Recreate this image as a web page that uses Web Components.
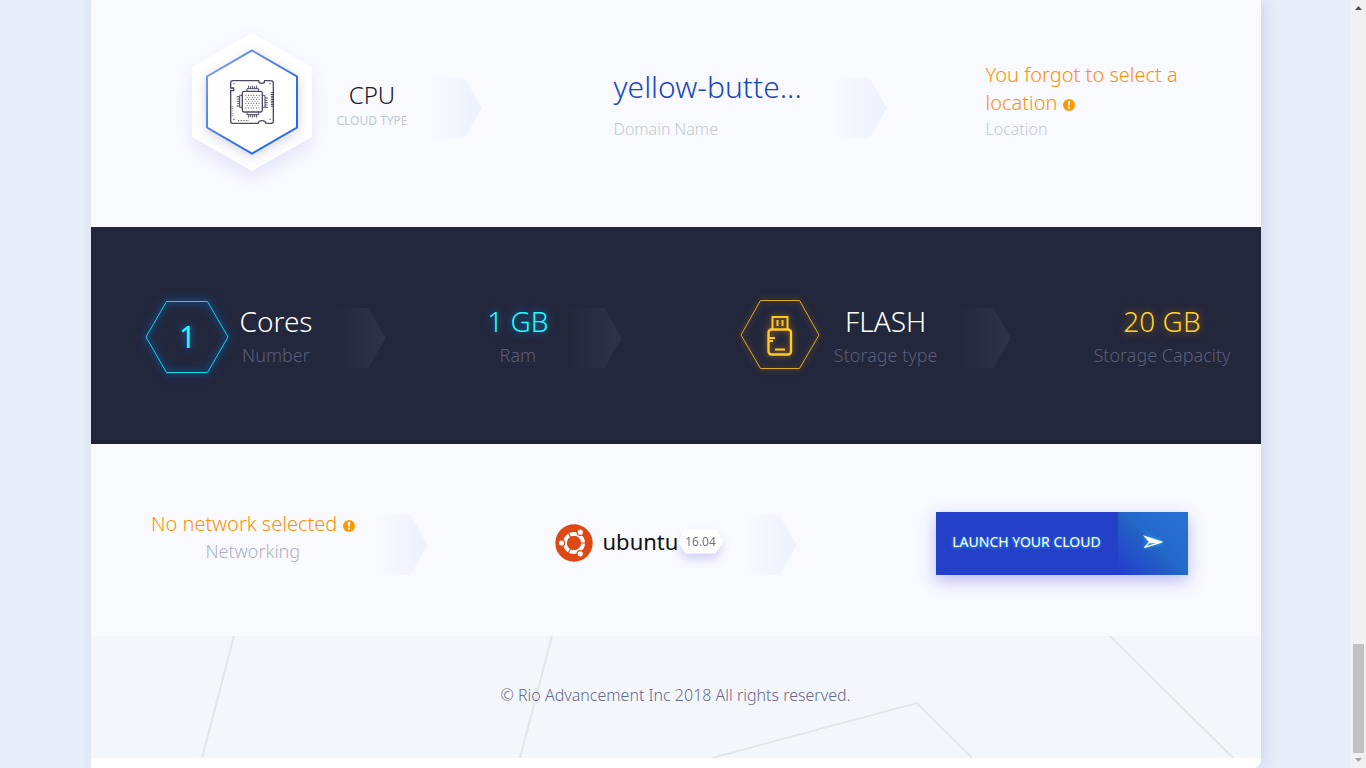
<!DOCTYPE html>
<html lang="en">
<head>
<meta charset="utf-8">
<meta name="viewport" content="width=device-width, initial-scale=1">
<title>Rio Advancement – Launch your cloud</title>
<style>
  html, body { margin: 0; padding: 0; }
  body { background: #e7eefa; font-family: "Noto Sans", "Open Sans", sans-serif; font-weight: 300; color: #14172f; }
</style>
</head>
<body>
<rio-app></rio-app>

<script>
const define = (name, html) => {
  const template = document.createElement('template');
  template.innerHTML = html;
  customElements.define(name, class extends HTMLElement {
    constructor() {
      super();
      this.attachShadow({ mode: 'open' }).append(template.content.cloneNode(true));
    }
  });
};

/* Fading chevron that closes a step */
define('rio-arrow', `
<style>
  :host { display: block; flex: none; width: 54px; height: 60px; margin-left: 19px; margin-top: var(--arrow-top, 0);
    background: linear-gradient(90deg, transparent, var(--arrow, #ecf1fc));
    clip-path: polygon(0 0, 37px 0, 100% 50%, 37px 100%, 0 100%); }
</style>`);

/* Round exclamation mark after a warning */
define('rio-alert', `
<style>
  :host { display: inline-block; width: 12px; height: 12px; vertical-align: -1px; }
  svg { display: block; }
</style>
<svg width="12" height="12" viewBox="0 0 12 12" aria-hidden="true">
  <circle cx="6" cy="6" r="6" fill="#ff9800"/>
  <path d="M4.800 2h2.400l-.4 4.600H5.200z" fill="#fff"/><rect x="5" y="7.600" width="2" height="2" fill="#fff"/>
</svg>`);

/* Value with a caption under it */
define('rio-value', `
<style>
  :host { display: block; flex: none; text-align: center; font-size: 28px; line-height: 40px; padding-top: 1px; color: var(--value, #fff); }
  .label { font-size: 18px; line-height: 28px; color: var(--label, #5a5e78); }
  :host([kind="cpu"]) { font-size: 24px; line-height: 30px; margin-top: 46px; min-width: 73px; color: #14172f; }
  :host([kind="cpu"]) .label { font-size: 12px; font-weight: 400; line-height: 22px; }
  :host([kind="domain"]) { font-size: 30px; margin-top: 33px; width: 200px; text-align: left; color: #1a48bc; }
  :host([kind="domain"]) .label { font-size: 16px; line-height: 24px; margin-top: 10px; }
  :host([kind="location"]) { font-size: 20px; line-height: 28px; margin-top: 27px; width: 208px; text-align: left; color: #ff9000; }
  :host([kind="location"]) .label { font-size: 16px; line-height: 24px; }
  :host([kind="network"]) { font-size: 20px; line-height: 28px; color: #ff9000; }
  :host([kind="network"]) .label { line-height: 26px; }
  :host([glow="cyan"]) .value { color: #1cfdff; text-shadow: 0 0 8px #0f7fd0; }
  :host([glow="amber"]) .value { color: #ffd22d; text-shadow: 0 0 8px #a86a10; }
</style>
<div class="value"><slot></slot></div>
<div class="label"><slot name="label"></slot></div>`);

define('rio-cpu-icon', `
<style>
  :host { display: block; flex: none; width: 120px; height: 138px; margin-right: 24px; }
  svg { display: block; overflow: visible; }
  .outer { filter: drop-shadow(0 8px 8px rgba(90, 90, 220, .13)); }
  .inner { filter: drop-shadow(0 3px 6px rgba(50, 50, 100, .2)); }
</style>
<svg width="120" height="138" viewBox="0 0 120 138" aria-hidden="true">
  <defs><linearGradient id="edge" x1="0" y1="0" x2="1" y2="1">
    <stop offset="0" stop-color="#86a0f8"/><stop offset=".6" stop-color="#2f70ee"/><stop offset="1" stop-color="#1f66f0"/>
  </linearGradient></defs>
  <path class="outer" fill="#fff" d="M60 0l60 34v70l-60 34L0 104V34z"/>
  <path class="inner" fill="#fff" stroke="url(#edge)" stroke-width="2" d="M60 17.500l45 26v51L60 120.500l-45-26v-51z"/>
  <g transform="translate(38 47) scale(.3333)" fill="none" stroke="#4a4c60" stroke-width="4">
    <path d="M8 2h78q0 8 9 8t9-8h18q8 0 8 8v114q0 6-6 6h-16q-2-8-12-8t-12 8H8q-6 0-6-6V32h9v-8H2V8q0-6 6-6z"/>
    <rect x="37" y="34" width="60" height="62" rx="5"/>
    <path d="M51 33v-7h35v7M51 97v7h35v-7M36 46h-7v36h7M98 46h7v36h-7" stroke-width="3"/>
    <path d="M56 26v-9M62 26v-7M68 26v-9M74 26v-7M80 26v-9M56 104v9M62 104v7M68 104v9M74 104v7M80 104v9M29 50h-9M29 57h-7M29 64h-9M29 71h-7M29 78h-9M105 54h9M105 61h7M105 68h9M105 75h7M105 82h9" stroke-width="3"/>
    <path d="M126 37v43" stroke-width="7" stroke-dasharray="3 2"/>
    <path d="M7 78v30" stroke-width="6" stroke-dasharray="2 5" opacity=".6"/>
    <path d="M24 122h33" stroke-width="3" stroke-dasharray="4 4"/>
    <path d="M46 46h43M46 58h43M46 70h43M46 84h43" stroke-width="3" stroke-dasharray="3 5"/>
    <path d="M50 52h37M50 64h37M50 77h37" stroke-width="2" stroke-dasharray="3 5"/>
    <path d="M10 11h4M118 11h4M10 118h4M118 118h4" stroke-width="3"/>
  </g>
</svg>`);

define('rio-count', `
<style>
  :host { display: grid; flex: none; width: 84px; height: 74px; margin-right: 10px; place-items: center;
    font-size: 30px; line-height: 40px; color: #1cfdff; }
  svg { grid-area: 1 / 1; overflow: visible; filter: drop-shadow(0 0 3px #0a78e0) drop-shadow(0 0 4px #0a5cb0); }
  span { grid-area: 1 / 1; font-weight: 400; text-shadow: 0 0 8px #0f7fd0; }
</style>
<svg width="84" height="74" viewBox="0 0 84 74" aria-hidden="true">
  <path d="M21.500 1.500h41L83 37 62.500 72.500h-41L1 37z" fill="none" stroke="#10dbe0"/>
</svg>
<span><slot></slot></span>`);

define('rio-flash-icon', `
<style>
  :host { display: block; flex: none; width: 80px; height: 70px; margin-right: 14px; }
  svg { display: block; overflow: visible; filter: drop-shadow(0 0 3px rgba(230, 140, 0, .7)); }
</style>
<svg width="80" height="70" viewBox="0 0 80 70" aria-hidden="true" fill="none" stroke="#ffc928">
  <path d="M20.500.500h39L79 35 59.500 68.500h-39L1 35z" stroke="#e0ac22"/>
  <rect x="28.500" y="29.500" width="22.500" height="25" rx="3" stroke-width="2.400"/>
  <path d="M32.500 29V17h15v12M37.500 20v6M42.500 20v6" stroke-width="2"/>
  <path d="M29 38h6M29 41h4M35 49.500h10" stroke-width="2"/>
</svg>`);

define('rio-ubuntu', `
<style>
  :host { display: flex; flex: none; align-items: center; margin-top: 15px; height: 38px; }
  svg { display: block; margin-right: 10px; }
  .name { font-weight: 400; font-size: 22px; line-height: 34px; padding-bottom: 4px; color: #111; width: 75px; }
  .version { width: 46px; height: 25px; margin-top: -4px;
    filter: drop-shadow(0 6px 5px rgba(80, 80, 220, .22)); font-size: 12px; font-weight: 400; line-height: 25px; color: #70727b; }
  .version span { display: block; text-align: center; background: #fff;
    clip-path: polygon(8px 0, 38px 0, 100% 50%, 38px 100%, 8px 100%, 0 50%); }
</style>
<svg width="38" height="38" viewBox="0 0 38 38" aria-hidden="true">
  <circle cx="19" cy="19" r="18.700" fill="#dd4814"/>
  <circle cx="19" cy="19" r="9" fill="none" stroke="#fff" stroke-width="4"/>
  <g stroke="#dd4814" stroke-width="1.200"><path d="M19 19h13M19 19l-6.500-11.300M19 19l-6.500 11.300"/></g>
  <circle cx="19" cy="19" r="6.900" fill="#dd4814"/>
  <g fill="#fff" stroke="#dd4814" stroke-width="1.200">
    <circle cx="6.500" cy="19" r="3.200"/><circle cx="25.300" cy="8.200" r="3.200"/><circle cx="25.300" cy="29.800" r="3.200"/>
  </g>
</svg>
<span class="name">ubuntu</span>
<div class="version"><span><slot></slot></span></div>`);

define('rio-launch', `
<style>
  :host { display: block; flex: none; margin-top: 3px; }
  button { display: flex; align-items: stretch; width: 252px; height: 63px; padding: 0; border: 0; cursor: pointer;
    background: #2440c8; color: #fff; font: inherit; font-size: 14px; font-weight: 400; line-height: 60px; box-shadow: 0 6px 16px rgba(70, 70, 210, .35); }
  .text { flex: 1; text-align: center; text-shadow: 0 1px 3px #25b0ff; }
  .go { display: grid; place-items: center; width: 70px; padding-bottom: 4px; box-sizing: border-box;
    background: linear-gradient(45deg, #2340ce 5%, #2364c4 50%, #2369c9 50%, #2b70d5 100%); }
  svg { overflow: visible; filter: drop-shadow(0 0 2px #38b0ff); }
</style>
<button type="button">
  <span class="text"><slot></slot></span>
  <span class="go"><svg width="20" height="14" viewBox="0 0 60 40" aria-hidden="true">
    <path fill="#fff" d="M0 0l60 19.500L18 20z"/>
    <path fill="none" stroke="#fff" stroke-width="4" stroke-linejoin="round" d="M56 20L5 36l13-14z"/>
  </svg></span>
</button>`);

/* One cell of a band: optional icon, value, chevron */
define('rio-step', `
<style>
  :host { display: flex; align-items: flex-start; justify-content: flex-end; min-width: 0; }
  :host([last]) { justify-content: flex-start; }
</style>
<slot></slot>`);

define('rio-band', `
<style>
  :host { display: grid; box-sizing: border-box; background: #f9faff; }
  :host([row="type"]) { grid-template-columns: 391fr 405fr 374fr; min-height: 227px; padding-top: 33px; --label: #c3c8d5; --arrow-top: 45px; }
  :host([row="type"]) ::slotted([last]) { padding-left: 99px; }
  :host([row="hardware"]) { grid-template-columns: 295fr 236fr 389fr 250fr; min-height: 217px; padding-top: 73px;
    background: #23273c; border-bottom: 4px solid #202338; --arrow: #2f3349; --arrow-top: 8px; }
  :host([row="hardware"]) ::slotted([last]) { padding-left: 83px; }
  :host([row="launch"]) { grid-template-columns: 337fr 369fr 464fr; min-height: 192px; padding-top: 65px; --label: #adb3c5; --arrow-top: 6px; }
  :host([row="launch"]) ::slotted([last]) { padding-left: 139px; }
</style>
<slot></slot>`);

define('rio-footer', `
<style>
  :host { display: grid; height: 122px; background: #f3f6fb; }
  svg { grid-area: 1 / 1; width: 100%; height: 122px; }
  p { grid-area: 1 / 1; place-self: center; margin: 0; padding-bottom: 4px; font-size: 16px; line-height: 24px; color: #65698a; }
</style>
<svg viewBox="0 0 1170 122" preserveAspectRatio="none" fill="none" stroke="#e2e6ec" stroke-width="2" aria-hidden="true">
  <path d="M143 0l-32 122M461 0l-32 122M621 122l205-55 55 55M1019 0l123 122"/>
</svg>
<p><slot></slot></p>`);

define('rio-scrollbar', `
<style>
  :host { display: flex; flex-direction: column; align-items: center; box-sizing: border-box; width: 15px; height: 100vh; background: #f1f1f1; }
  svg { flex: none; display: block; }
  .track { flex: 1; display: flex; flex-direction: column; justify-content: flex-end; }
  .thumb { width: 11px; height: 109px; background: #c1c1c1; }
</style>
<svg width="15" height="15" viewBox="0 0 15 15" aria-hidden="true"><path d="M4 10l3.500-4L11 10z" fill="#505050"/></svg>
<div class="track"><div class="thumb"></div></div>
<svg width="15" height="15" viewBox="0 0 15 15" aria-hidden="true"><path d="M4 5l3.500 4L11 5z" fill="#a3a3a3"/></svg>`);

define('rio-app', `
<style>
  :host { display: grid; grid-template-columns: 1fr 15px; min-height: 100vh; overflow: hidden; }
  main { width: calc(100% - 32px); max-width: 1170px; justify-self: center; box-sizing: border-box; padding-bottom: 10px;
    align-self: start; background: #fff; border-radius: 0 0 8px 0; box-shadow: 3px 0 14px rgba(50, 60, 110, .14); }
</style>
<main>
  <rio-band row="type">
    <rio-step><rio-cpu-icon></rio-cpu-icon><rio-value kind="cpu">CPU<span slot="label">CLOUD TYPE</span></rio-value><rio-arrow></rio-arrow></rio-step>
    <rio-step><rio-value kind="domain">yellow-butte...<span slot="label">Domain Name</span></rio-value><rio-arrow></rio-arrow></rio-step>
    <rio-step last><rio-value kind="location">You forgot to select a location <rio-alert></rio-alert><span slot="label">Location</span></rio-value></rio-step>
  </rio-band>
  <rio-band row="hardware">
    <rio-step><rio-count>1</rio-count><rio-value>Cores<span slot="label">Number</span></rio-value><rio-arrow></rio-arrow></rio-step>
    <rio-step><rio-value glow="cyan">1 GB<span slot="label">Ram</span></rio-value><rio-arrow></rio-arrow></rio-step>
    <rio-step><rio-flash-icon></rio-flash-icon><rio-value>FLASH<span slot="label">Storage type</span></rio-value><rio-arrow></rio-arrow></rio-step>
    <rio-step last><rio-value glow="amber">20 GB<span slot="label">Storage Capacity</span></rio-value></rio-step>
  </rio-band>
  <rio-band row="launch">
    <rio-step><rio-value kind="network">No network selected <rio-alert></rio-alert><span slot="label">Networking</span></rio-value><rio-arrow></rio-arrow></rio-step>
    <rio-step><rio-ubuntu>16.04</rio-ubuntu><rio-arrow></rio-arrow></rio-step>
    <rio-step last><rio-launch>LAUNCH YOUR CLOUD</rio-launch></rio-step>
  </rio-band>
  <rio-footer>© Rio Advancement Inc 2018 All rights reserved.</rio-footer>
</main>
<rio-scrollbar></rio-scrollbar>`);
</script>
</body>
</html>
